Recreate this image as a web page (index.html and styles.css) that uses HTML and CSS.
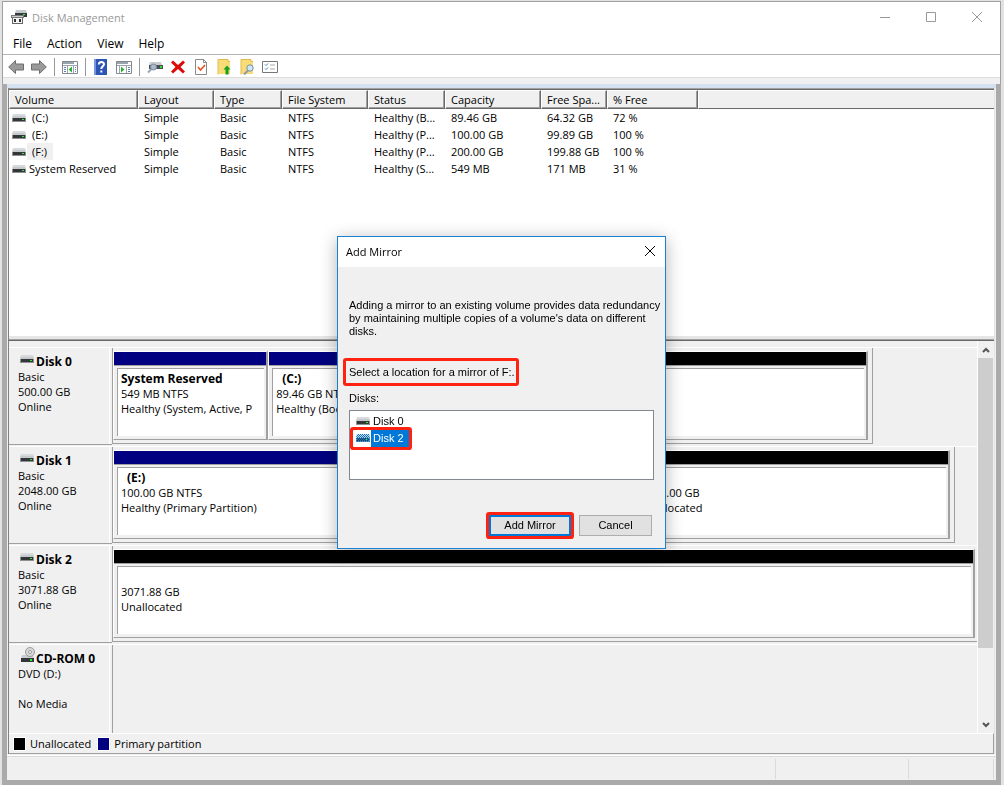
FILE: index.html
```html
<!DOCTYPE html>
<html lang="en">
<head>
<meta charset="utf-8">
<title>Disk Management</title>
<link rel="stylesheet" href="styles.css">
</head>
<body>
<svg class="sprite" aria-hidden="true">
  <symbol id="drive" viewBox="0 0 14 8">
    <path d="M1 0h12l1 4H0z" fill="#c6cacd"/><path d="M1 0h12v2H1z" fill="#d8dbde"/>
    <rect y="4" width="14" height="4" fill="#8d9195"/><rect x="1" y="4" width="12" height="3" fill="#33373a"/>
    <rect x="10" y="5" width="2" height="1" fill="#2bf22b"/>
  </symbol>
</svg>
<main class="window">
  <header class="top">
    <div class="titlebar">
      <svg class="app-icon" viewBox="0 0 16 16"><path d="M5 1h10l1 3H4z" fill="#c4c8cb"/><path d="M4 4h12v4H4z" fill="#363a3d"/><path d="M12 5h2v1h-2z" fill="#2bf22b"/><path d="M0 6h13v3H0z" fill="#777"/><path d="M1 7h11v1H1z" fill="#ccc"/><path d="M1 9h11v6H1z" fill="#666"/><path d="M2 9h9v5H2z" fill="#f5f5f5"/><path d="M3 10h2v3H3zM8 10h2v3H8z" fill="#333"/></svg>
      <h1 class="title">Disk Management</h1>
      <div class="window-buttons">
        <button type="button" aria-label="Minimize"><svg viewBox="0 0 10 10"><path d="M0 5.5h10"/></svg></button>
        <button type="button" aria-label="Maximize"><svg viewBox="0 0 10 10"><path d="M.5.5h9v9h-9z"/></svg></button>
        <button type="button" aria-label="Close"><svg viewBox="0 0 10 10"><path d="M0 0l10 10M10 0L0 10"/></svg></button>
      </div>
    </div>
    <nav class="menubar">
      <button type="button">File</button><button type="button">Action</button><button type="button">View</button><button type="button">Help</button>
    </nav>
    <div class="toolbar">
      <button type="button" aria-label="Back"><svg viewBox="0 0 16 16"><path d="M.7 8L7.500 1.500v3.500h8v6h-8v3.500z" fill="#9a9a9a" stroke="#6e6e6e"/></svg></button>
      <button type="button" aria-label="Forward"><svg viewBox="0 0 16 16"><path d="M15.300 8L8.500 1.500v3.500h-8v6h8v3.500z" fill="#9a9a9a" stroke="#6e6e6e"/></svg></button>
      <span class="sep"></span>
      <button type="button" aria-label="Show console tree"><svg viewBox="0 0 16 16"><path d="M.5 2.500h15v12H.5z" fill="#fff" stroke="#808890"/><path d="M1 3h11v2H1z" fill="#9aa4ae"/><path d="M1 6.500h14M5.500 7v7M11.500 7v7" stroke="#9aa4ae"/><path d="M2 8.500h2M2 10.500h2M2 12.500h2M13 8.500h1M13 10.500h1M13 12.500h1" stroke="#5b7fa6"/><path d="M10 7.500v6L6.500 10.500z" fill="#2fae2f"/></svg></button>
      <span class="sep"></span>
      <button type="button" aria-label="Help"><svg viewBox="0 0 16 16"><path d="M1 0h13v16H1z" fill="#2d55b5"/><path d="M1 0h2v16H1z" fill="#7896dc"/><path d="M5.800 5.500C5.800 2.300 11 2.300 11 5.200c0 2-2.700 2.100-2.700 4.800" fill="none" stroke="#fff" stroke-width="2"/><path d="M7.300 11.500h2v2h-2z" fill="#fff"/></svg></button>
      <button type="button" aria-label="Show action pane"><svg viewBox="0 0 16 16"><path d="M.5 2.500h15v12H.5z" fill="#fff" stroke="#808890"/><path d="M1 3h11v2H1z" fill="#9aa4ae"/><path d="M1 6.500h14M10.500 7v7M3.500 7v7" stroke="#9aa4ae"/><path d="M12 8.500h2M12 10.500h2M12 12.500h2" stroke="#5b7fa6"/><path d="M5 7.500v6L8.500 10.500z" fill="#2fae2f"/></svg></button>
      <span class="sep"></span>
      <button type="button" aria-label="Rescan disks"><svg viewBox="0 0 16 16"><path d="M3 3h11l1 3H2z" fill="#c9cdd1"/><path d="M2 6h14v4H2z" fill="#4a4e52"/><path d="M13 7h2v2h-2z" fill="#2be32b"/><path d="M4.500 10L1 13.500" stroke="#9aa6b4" stroke-width="2"/><circle cx="6.500" cy="8" r="3" fill="#a9bccd" stroke="#78899c"/></svg></button>
      <button type="button" aria-label="Delete"><svg viewBox="0 0 16 16"><path d="M3 1.500L8 6l5-4.500L15 3.500 10.500 8l4.500 4.500-2 2L8 10l-5 4.500-2-2L5.500 8 1 3.500z" fill="#dc0a0a"/></svg></button>
      <button type="button" aria-label="Properties"><svg viewBox="0 0 16 16"><path d="M2.500.5h8l3 3v12h-11z" fill="#fff" stroke="#8a8a8a"/><path d="M10.500.5v3h3" fill="none" stroke="#8a8a8a"/><path d="M5 8l2.500 3L12 6" fill="none" stroke="#e8501e" stroke-width="1.600"/></svg></button>
      <button type="button" aria-label="Up one level"><svg viewBox="0 0 16 16"><path d="M2 0h10v2h2v13H2z" fill="#f8dc78"/><path d="M2 15.500V.5h10v2h2" fill="none" stroke="#e2ba4c"/><path d="M11 6.500l3.500 4H12.500v5h-3v-5H7.500z" fill="#18a018"/></svg></button>
      <button type="button" aria-label="Find"><svg viewBox="0 0 16 16"><path d="M2 0h10v2h2v13H2z" fill="#f8dc78"/><path d="M2 15.500V.5h10v2h2" fill="none" stroke="#e2ba4c"/><path d="M9 11.500l-4 4" stroke="#8d9aaa" stroke-width="2"/><circle cx="11" cy="9" r="3.200" fill="#cfe6f6" stroke="#78909f"/></svg></button>
      <button type="button" aria-label="Options"><svg viewBox="0 0 16 16"><path d="M.5 2.500h15v11H.5z" fill="#fff" stroke="#777"/><path d="M3 5.500l1 1 2-2M3 9.500l1 1 2-2" fill="none" stroke="#4b78c0"/><path d="M8 6h5M8 10h5" stroke="#aaa"/></svg></button>
    </div>
    <div class="toolbar-edge"></div>
  </header>

  <div class="frame">
    <div class="strip"></div>
    <section class="panes">
      <div class="volumes">
        <table class="volume-table">
          <colgroup><col class="c-volume"><col class="c-layout"><col class="c-type"><col class="c-fs"><col class="c-status"><col class="c-capacity"><col class="c-space"><col class="c-free"><col></colgroup>
          <thead><tr><th>Volume</th><th>Layout</th><th>Type</th><th>File System</th><th>Status</th><th>Capacity</th><th>Free Spa...</th><th>% Free</th><td></td></tr></thead>
          <tbody>
            <tr><td><svg class="drive"><use href="#drive"/></svg><span class="letter">(C:)</span></td><td>Simple</td><td>Basic</td><td>NTFS</td><td>Healthy (B...</td><td>89.46 GB</td><td>64.32 GB</td><td>72 %</td><td></td></tr>
            <tr><td><svg class="drive"><use href="#drive"/></svg><span class="letter">(E:)</span></td><td>Simple</td><td>Basic</td><td>NTFS</td><td>Healthy (P...</td><td>100.00 GB</td><td>99.89 GB</td><td>100 %</td><td></td></tr>
            <tr><td><svg class="drive"><use href="#drive"/></svg><span class="letter current">(F:)</span></td><td>Simple</td><td>Basic</td><td>NTFS</td><td>Healthy (P...</td><td>200.00 GB</td><td>199.88 GB</td><td>100 %</td><td></td></tr>
            <tr><td><svg class="drive"><use href="#drive"/></svg><span class="name">System Reserved</span></td><td>Simple</td><td>Basic</td><td>NTFS</td><td>Healthy (S...</td><td>549 MB</td><td>171 MB</td><td>31 %</td><td></td></tr>
          </tbody>
        </table>
      </div>
      <div class="splitter"></div>
      <div class="graph">
        <div class="disks">
          <article class="disk">
            <div class="disk-label"><h2><svg class="drive"><use href="#drive"/></svg>Disk 0</h2><p>Basic</p><p>500.00 GB</p><p>Online</p></div>
            <div class="lane"><div class="track track-0">
              <div class="part w-154"><div class="bar primary"></div><div class="box"><b>System Reserved</b><span>549 MB NTFS</span><span>Healthy (System, Active, P</span></div></div>
              <div class="part w-220"><div class="bar primary"></div><div class="box"><b class="indent">(C:)</b><span>89.46 GB NTFS</span><span>Healthy (Boot, Page File)</span></div></div>
              <div class="part w-381"><div class="bar free"></div><div class="box"></div></div>
            </div></div>
          </article>
          <article class="disk">
            <div class="disk-label"><h2><svg class="drive"><use href="#drive"/></svg>Disk 1</h2><p>Basic</p><p>2048.00 GB</p><p>Online</p></div>
            <div class="lane"><div class="track track-1">
              <div class="part w-260"><div class="bar primary"></div><div class="box"><b class="indent">(E:)</b><span>100.00 GB NTFS</span><span>Healthy (Primary Partition)</span></div></div>
              <div class="part w-260"><div class="bar primary"></div><div class="box"></div></div>
              <div class="part w-317"><div class="bar free"></div><div class="box"><b></b><span>1748.00 GB</span><span>Unallocated</span></div></div>
            </div></div>
          </article>
          <article class="disk">
            <div class="disk-label"><h2><svg class="drive"><use href="#drive"/></svg>Disk 2</h2><p>Basic</p><p>3071.88 GB</p><p>Online</p></div>
            <div class="lane"><div class="track track-2">
              <div class="part w-154"><div class="bar free"></div><div class="box"><b></b><span>3071.88 GB</span><span>Unallocated</span></div></div>
            </div></div>
          </article>
          <article class="disk cdrom">
            <div class="disk-label"><h2><svg class="cd" viewBox="0 0 16 16"><path d="M2 8h11l1 4H1z" fill="#c9cdd1"/><circle cx="10" cy="5" r="4.500" fill="#d8d8d8" stroke="#9a9a9a"/><circle cx="10" cy="5" r="1.500" fill="#fff" stroke="#999"/><path d="M1 11h13v4H1z" fill="#33373a"/><path d="M10 12h2v2h-2z" fill="#2bf22b"/></svg>CD-ROM 0</h2><p>DVD (D:)</p><p></p><p>No Media</p></div>
            <div class="lane"></div>
          </article>
        </div>
        <div class="scrollbar">
          <button type="button" aria-label="Scroll up"><svg viewBox="0 0 8 6"><path d="M1 5l3-3 3 3"/></svg></button>
          <div class="rail"><div class="thumb"></div></div>
          <button type="button" aria-label="Scroll down"><svg viewBox="0 0 8 6"><path d="M1 1l3 3 3-3"/></svg></button>
        </div>
      </div>
      <div class="legend"><i class="swatch free"></i><span>Unallocated</span><i class="swatch primary"></i><span>Primary partition</span></div>
    </section>
    <footer class="status"><span class="grow"></span><span class="s-mid"></span><span class="s-end"></span></footer>
  </div>
</main>

<div class="overlay">
  <section class="dialog" role="dialog" aria-labelledby="dialog-title">
    <header class="dialog-head"><h2 id="dialog-title">Add Mirror</h2><button type="button" aria-label="Close"><svg viewBox="0 0 10 10"><path d="M0 0l10 10M10 0L0 10"/></svg></button></header>
    <div class="dialog-body">
      <p class="intro">Adding a mirror to an existing volume provides data redundancy by maintaining multiple copies of a volume's data on different disks.</p>
      <p class="prompt">Select a location for a mirror of F:.</p>
      <p class="list-label" id="disks-label">Disks:</p>
      <ul class="listbox" role="listbox" aria-labelledby="disks-label" tabindex="0">
        <li role="option" aria-selected="false"><svg class="drive"><use href="#drive"/></svg><span>Disk 0</span></li>
        <li role="option" aria-selected="true" class="selected"><svg class="drive" viewBox="0 0 14 8"><defs><pattern id="dither" width="2" height="2" patternUnits="userSpaceOnUse"><path d="M0 0h1v1H0zM1 1h1v1H1z" fill="#0078d7"/></pattern></defs><use href="#drive" width="14" height="8"/><path d="M1 0h12l1 4v4H0V4z" fill="url(#dither)"/></svg><span>Disk 2</span></li>
      </ul>
      <div class="actions"><button type="button" class="default">Add Mirror</button><button type="button">Cancel</button></div>
    </div>
  </section>
</div>
</body>
</html>
```
FILE: styles.css
```css
* { box-sizing: border-box; }
body {
  margin: 0;
  background: #e2e2e2;
  color: #000;
  font: 11px/15px "Open Sans", "Noto Sans", sans-serif;
}
h1, h2, p, ul { margin: 0; padding: 0; font-size: inherit; font-weight: inherit; }
button { margin: 0; padding: 0; border: 0; background: none; font: inherit; color: inherit; }
svg { display: block; flex: none; }
.sprite { position: absolute; width: 0; height: 0; }
.drive { width: 14px; height: 8px; }

.window {
  display: flex;
  flex-direction: column;
  min-height: 100vh;
  padding: 1px 3px 2px 2px;
}

/* Title, menu and toolbar */
.top { background: #fff; border: 1px solid #a0a0a0; border-bottom: 0; }
.titlebar { display: flex; align-items: center; height: 30px; padding-left: 8px; }
.app-icon { width: 16px; height: 16px; }
.title { margin-left: 5px; color: #999; }
.window-buttons { display: flex; margin-left: auto; }
.window-buttons button { display: grid; place-items: center; width: 46px; height: 30px; }
.window-buttons svg, .dialog-head svg { width: 10px; height: 10px; overflow: visible; fill: none; stroke: #999; }
.menubar { display: flex; gap: 15px; height: 22px; padding-left: 10px; font-size: 12px; }
.toolbar {
  display: flex;
  align-items: center;
  gap: 7px;
  height: 23px;
  padding: 2px 0 0 5px;
  border-top: 1px solid #b4b4b4;
}
.toolbar svg { width: 16px; height: 16px; }
.sep { width: 1px; height: 18px; background: #999; }
.toolbar-edge { height: 7px; background: #f0f0f0; border-top: 1px solid #dcdcdc; }

/* Thick lower frame */
.frame {
  flex: 1;
  display: flex;
  flex-direction: column;
  border: 5px solid #aaa;
  border-top: 0;
  background: #f0f0f0;
}
.strip { height: 4px; background: #d4e1f0; }
.panes {
  flex: 1;
  display: flex;
  flex-direction: column;
  margin: 0 1px;
  border-left: 1px solid #808080;
  border-right: 1px solid #e3e3e3;
}
.volumes { height: 247px; overflow: hidden; background: #fff; border-top: 1px solid #a0a0a0; }
.volume-table { width: 100%; table-layout: fixed; border-collapse: separate; border-spacing: 0; border-top: 1px solid #696969; }
.volume-table th, .volume-table td { height: 17px; padding: 0 0 0 5px; text-align: left; font-weight: 400; white-space: nowrap; overflow: hidden; }
.volume-table thead th, .volume-table thead td {
  height: 19px;
  background: #f0f0f0;
  border-top: 1px solid #fff;
  border-left: 1px solid #fff;
  border-bottom: 1px solid #696969;
}
.volume-table thead th { border-right: 1px solid #696969; box-shadow: inset -1px -1px #a0a0a0; }
.volume-table tbody td { padding-left: 6px; }
.volume-table tbody td:first-child { display: flex; align-items: center; padding-left: 3px; }
.volume-table .drive { margin-top: 1px; }
.c-volume { width: 129px; }
.c-layout { width: 76px; }
.c-type { width: 68px; }
.c-fs { width: 86px; }
.c-status { width: 77px; }
.c-capacity { width: 96px; }
.c-space { width: 66px; }
.c-free { width: 91px; }
.letter { margin-left: 1px; padding: 1px 6px 1px 5px; }
.current { background: #f0f0f0; }
.name { margin-left: 3px; }
.splitter {
  height: 6px;
  border-top: 1px solid #fff;
  border-bottom: 1px solid #696969;
  background: #e6e6e6;
  box-shadow: inset 0 -1px #a0a0a0;
}

/* Disk graph */
.graph { flex: 1; display: flex; overflow: hidden; }
.disks { flex: 1; min-width: 0; height: 392px; padding-top: 6px; overflow: hidden; }
.disk { display: flex; height: 99px; border-top: 1px solid #fff; }
.disk-label { width: 103px; height: 97px; padding: 6px 0 0 9px; border-bottom: 1px solid #a0a0a0; box-shadow: inset -2px 0 #f0f0f0, inset -3px 0 #fff; }
.disk-label h2 { display: flex; gap: 2px; height: 15px; padding-left: 2px; font-size: 12px; font-weight: 700; }
.disk-label p { height: 15px; }
.disk-label .drive { margin-top: 1px; }
.cd { width: 16px; height: 16px; margin: -4px 0 0; }
.disk-label .cd { margin-right: -2px; }
.lane { flex: 1; height: 96px; min-width: 0; border-left: 1px solid #a0a0a0; }
.track { display: flex; height: 96px; padding: 3px 4px 3px 0; border-right: 1px solid #a0a0a0; border-bottom: 1px solid #a0a0a0; }
.track-0 { width: 88%; }
.track-1 { width: 97.4%; }
.track-2 { padding-right: 2px; border-right: 0; }
.part {
  display: flex;
  flex-direction: column;
  min-width: 0;
  border-top: 1px solid #fff;
  border-left: 1px solid #fff;
  border-right: 2px solid #a0a0a0;
  border-bottom: 1px solid #a0a0a0;
}
.w-154 { flex: 154 1 0; }
.w-220 { flex: 220 1 0; }
.w-381 { flex: 381 1 0; }
.w-260 { flex: 260 1 0; }
.w-317 { flex: 317 1 0; }
.bar { height: 14px; border-bottom: 1px solid #a0a0a0; }
.primary { background: #000080; }
.free { background: #000; }
.box {
  flex: 1;
  display: flex;
  flex-direction: column;
  margin: 2px 2px 3px 3px;
  padding: 2px 3px 0;
  border-top: 1px solid #a0a0a0;
  border-left: 1px solid #a0a0a0;
  background: #fff;
  white-space: nowrap;
  overflow: hidden;
}
.box b, .box span { height: 15px; overflow: hidden; }
.box b { font-size: 12px; }
.indent { padding-left: 6px; }
.cdrom .lane, .cdrom .disk-label { border-bottom: 0; }
.scrollbar { display: flex; flex-direction: column; width: 17px; border-left: 1px solid #fff; }
.scrollbar button { display: grid; place-items: center; height: 17px; }
.scrollbar svg { width: 8px; height: 6px; fill: none; stroke: #555; stroke-width: 2; }
.rail { flex: 1; }
.thumb { height: 81%; margin-right: 1px; background: #cdcdcd; }
.legend {
  display: flex;
  align-items: center;
  gap: 5px;
  height: 21px;
  padding-left: 5px;
  border: solid #a0a0a0;
  border-width: 1px 1px 1px 0;
  border-top-color: #fff;
}
.swatch { width: 11px; height: 12px; outline: 1px solid #fff; }
.legend span + .swatch { margin-left: 2px; }
.status {
  display: flex;
  height: 24px;
  margin-top: 2px;
  padding: 2px 2px 1px 0;
  border-top: 1px solid #dadada;
  box-shadow: 0 -1px #fff;
}
.status span { border-right: 1px solid #dadada; }
.grow { flex: 1; }
.s-mid { width: 133px; }
.s-end { width: 85px; }

/* Dialog */
.overlay { position: fixed; inset: 0; display: grid; place-content: center; padding-right: 1px; }
.dialog {
  width: 329px;
  border: 1px solid #1a80d0;
  background: #f0f0f0;
  box-shadow: 0 3px 16px rgba(0, 0, 0, .3);
}
.dialog-head { display: flex; justify-content: space-between; align-items: center; height: 30px; padding: 0 10px 2px 8px; background: #fff; }
.dialog-head svg { stroke: #000; }
.dialog-body { padding: 32px 11px 12px; font: 11px/13px "Liberation Sans", Arial, sans-serif; }
.intro { margin-right: -10px; }
.prompt { width: 176px; margin: 20px 0 0 -6px; padding: 2px 3px; border: 3px solid #f21; border-radius: 3px; line-height: 18px; white-space: nowrap; }
.list-label { margin: 6px 0 5px; }
.listbox { height: 70px; margin-bottom: 35px; padding: 2px 3px; border: 1px solid #828790; background: #fff; list-style: none; }
.listbox li { display: flex; align-items: center; width: 56px; height: 17px; padding-left: 3px; }
.listbox .drive { margin-bottom: 1px; }
.listbox span { flex: 1; margin-left: 1px; padding-left: 2px; line-height: 17px; }
.selected { box-shadow: 0 0 0 3px #f21; border-radius: 1px; }
.selected span { background: #0078d7; color: #fff; }
.actions { display: flex; justify-content: flex-end; gap: 8px; padding-right: 2px; }
.actions button { width: 73px; height: 21px; border: 1px solid #adadad; background: #e1e1e1; }
.actions .default { width: 82px; border: 2px solid #0078d7; border-radius: 1px; box-shadow: 0 0 0 3px #f21; }
```
